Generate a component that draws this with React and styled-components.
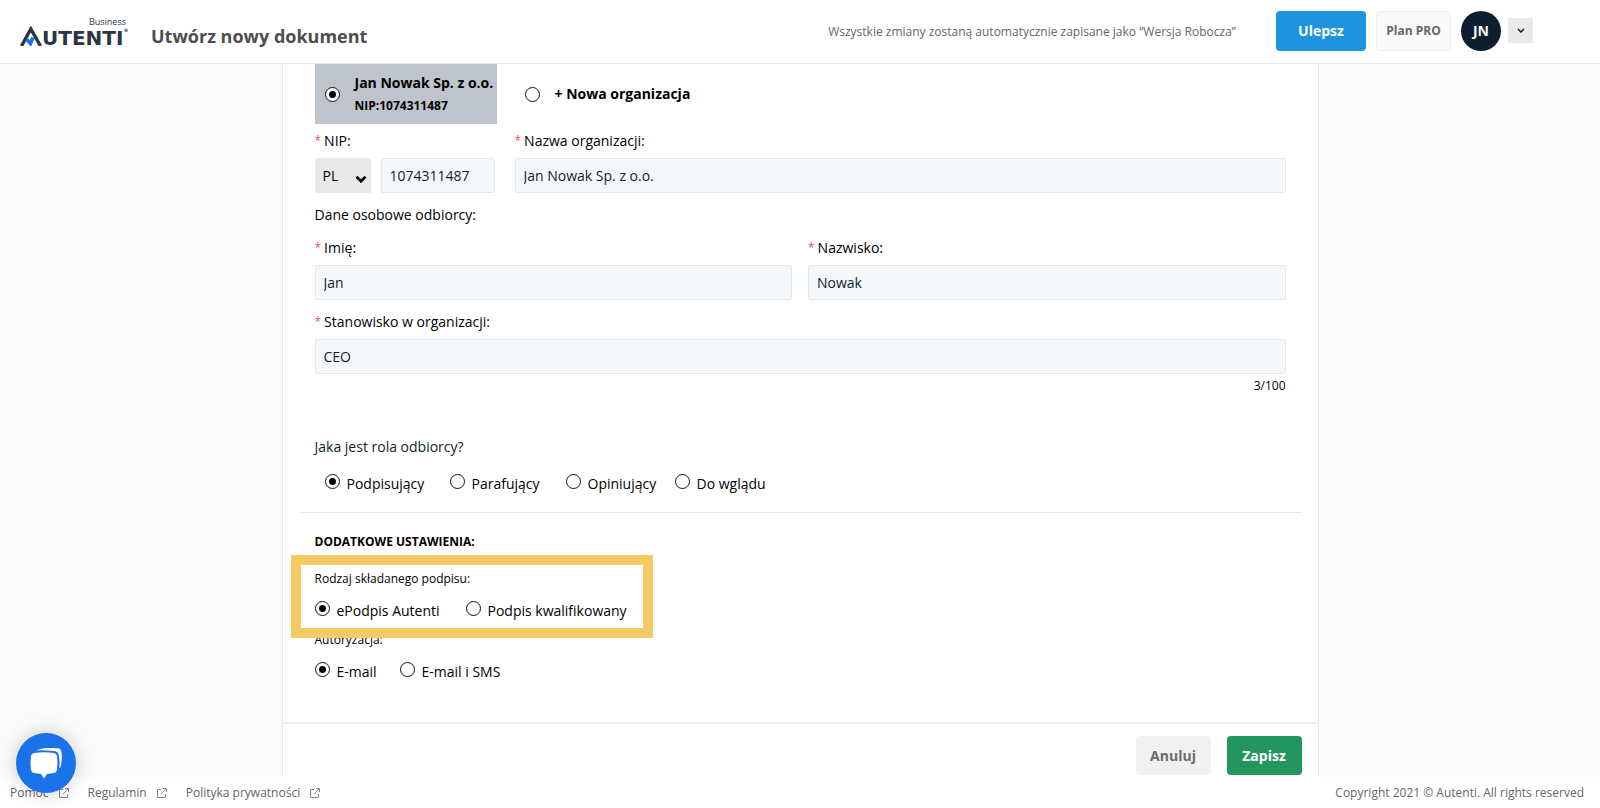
import React, { useState } from "react";
import styled, { createGlobalStyle } from "styled-components";

const GlobalStyle = createGlobalStyle`
  *, *::before, *::after { box-sizing: border-box; }
  body {
    margin: 0;
    background: #fbfbfb;
    color: #000;
    font-family: "Open Sans", "Noto Sans", sans-serif;
    font-size: 14px;
    line-height: 20px;
  }
  button, input, select { font: inherit; }
`;

const Page = styled.div`
  display: flex;
  flex-direction: column;
  min-height: 100vh;
`;

const Header = styled.header`
  display: flex;
  align-items: center;
  height: 64px;
  padding: 0 67px 2px 20px;
  background: #fff;
  border-bottom: 1px solid #e9e9e9;
`;

const Logo = styled.a`
  display: flex;
  flex-direction: column;
  width: 111px;
  padding-top: 2px;
  color: #2a3642;
  text-decoration: none;
`;

const LogoTag = styled.span`
  align-self: flex-end;
  margin-right: 5px;
  font-size: 9px;
  line-height: 9px;
`;

const LogoWord = styled.span`
  display: flex;
  align-items: flex-end;
  font-family: "DejaVu Sans", sans-serif;
  font-size: 20px;
  font-weight: 700;
  line-height: 18px;

  svg { flex: none; margin-bottom: 1px; }
  sup { align-self: flex-start; font-size: 5px; line-height: 8px; }
`;

const Title = styled.h1`
  margin: 10px 0 0 20px;
  color: #4d4d4d;
  font-size: 18px;
  line-height: 26px;
  white-space: nowrap;
`;

const AutosaveNote = styled.p`
  margin: 2px 40px 0 auto;
  color: #666;
  font-size: 12px;
  white-space: nowrap;
`;

const HeaderActions = styled.div`
  display: flex;
  align-items: center;
  gap: 10px;
`;

const UpgradeButton = styled.button`
  width: 90px;
  height: 40px;
  padding: 0;
  border: 0;
  border-radius: 4px;
  background: #1f93df;
  color: #fff;
  font-weight: 700;
`;

const PlanButton = styled.button`
  width: 75px;
  height: 40px;
  padding: 0;
  border: 1px solid #f0f0f0;
  border-radius: 4px;
  background: #fafafa;
  color: #666;
  font-size: 12px;
  font-weight: 700;
`;

const Account = styled.div`
  display: flex;
  align-items: center;
  gap: 7px;
`;

const Avatar = styled.span`
  display: grid;
  place-items: center;
  width: 40px;
  height: 40px;
  border-radius: 50%;
  background: #0d1f2f;
  color: #fff;
  font-weight: 700;
`;

const AccountToggle = styled.button`
  display: grid;
  place-items: center;
  width: 25px;
  height: 25px;
  padding: 0;
  border: 0;
  background: #e9e9e9;
  color: #0d1f2f;
`;

const Main = styled.main`
  display: flex;
  flex: 1;
  justify-content: center;
`;

const Card = styled.form`
  display: flex;
  flex-direction: column;
  width: 100%;
  max-width: 1037px;
  background: #fff;
  border: solid #e9e9e9;
  border-width: 0 1px;
`;

const Body = styled.div`
  flex: 1;
  padding: 0 32px 40px;
`;

const Organizations = styled.div`
  display: flex;
  gap: 18px;
`;

const OrganizationOption = styled.label`
  display: flex;
  align-items: center;
  gap: 15px;
  min-width: 182px;
  height: 60px;
  padding-left: 10px;
  background: ${(p) => (p.$active ? "#bfc3cc" : "transparent")};
  font-weight: 700;
  white-space: nowrap;

  small {
    display: block;
    margin-top: 4px;
    font-size: 12px;
    line-height: 18px;
  }
`;

const Radio = styled.input.attrs({ type: "radio" })`
  appearance: none;
  flex: none;
  width: 15px;
  height: 15px;
  margin: 0;
  border: 1px solid #111;
  border-radius: 50%;
  background: #fff;

  &:checked {
    background: radial-gradient(circle, #000 0 3px, #fff 4px);
  }
`;

const Row = styled.div`
  display: flex;
  gap: ${(p) => p.$gap}px;
  margin-top: ${(p) => p.$top}px;
`;

const Field = styled.div`
  flex: ${(p) => (p.$width ? "none" : 1)};
  width: ${(p) => (p.$width ? `${p.$width}px` : "auto")};
`;

const FieldLabel = styled.label`
  display: flex;
  gap: 3px;
  margin-bottom: 7px;

  &::before {
    content: "*";
    color: #f5515f;
    font-size: 12px;
  }
`;

const TextInput = styled.input`
  display: block;
  width: 100%;
  min-width: 0;
  height: 35px;
  padding: 0 8px;
  border: 1px solid #e6e9eb;
  border-radius: 2px;
  background: #f4f8fb;
  color: #0d1f2f;
`;

const TaxIdInputs = styled.div`
  display: flex;
  gap: 10px;
`;

const CountryBox = styled.div`
  position: relative;
  flex: none;
  width: 56px;

  svg {
    position: absolute;
    right: 4px;
    bottom: 10px;
    pointer-events: none;
  }
`;

const CountrySelect = styled.select`
  appearance: none;
  width: 100%;
  height: 35px;
  padding: 0 8px;
  border: 0;
  border-radius: 2px;
  background: #e9e9e9;
  color: #000;
`;

const SectionText = styled.p`
  margin: 12px 0 0;
`;

const Counter = styled.p`
  margin: 3px 0 0;
  font-size: 12px;
  line-height: 18px;
  text-align: right;
`;

const Group = styled.fieldset`
  position: relative;
  width: fit-content;
  margin: ${(p) => p.$top}px 0 0;
  padding: 0;
  border: 0;
`;

const HighlightedGroup = styled(Group)`
  z-index: 1;

  &::after {
    content: "";
    position: absolute;
    inset: -33px -26px -17px -24px;
    border: 10px solid #f3ca63;
    pointer-events: none;
  }
`;

const RoleLegend = styled.legend`
  padding: 0;
  color: #0d1f2f;
`;

const SmallLegend = styled.legend`
  padding: 0;
  font-size: 12px;
  line-height: 18px;
`;

const Choices = styled.div`
  display: grid;
  grid-template-columns: ${(p) => p.$columns};
  margin-top: ${(p) => p.$top}px;
  padding-left: ${(p) => p.$indent || 0}px;
`;

const Choice = styled.label`
  display: flex;
  align-items: flex-start;
  gap: 7px;
  white-space: nowrap;
`;

const Divider = styled.hr`
  height: 1px;
  margin: 18px -16px 0;
  border: 0;
  background: #e9e9e9;
`;

const SectionHeading = styled.h2`
  margin: 20px 0 0;
  font-size: 12px;
  line-height: 18px;
`;

const CardFooter = styled.div`
  display: flex;
  justify-content: flex-end;
  gap: 16px;
  padding: 12px 16px 2px;
  border-top: 2px solid #f0f0f0;
`;

const FormButton = styled.button`
  width: 75px;
  height: 39px;
  padding: 0;
  border: 0;
  border-radius: 4px;
  background: ${(p) => (p.$primary ? "#23965f" : "#f1f1f1")};
  color: ${(p) => (p.$primary ? "#fff" : "#6b6b6b")};
  font-weight: 700;
`;

const Footer = styled.footer`
  display: flex;
  align-items: center;
  gap: 18px;
  height: 31px;
  padding: 0 16px 0 10px;
  background: #fff;
  color: #666;
  font-size: 12px;
`;

const FooterLink = styled.a`
  display: flex;
  align-items: center;
  gap: 9px;
  color: inherit;
  text-decoration: none;
`;

const Copyright = styled.span`
  margin-left: auto;
`;

const ChatButton = styled.button`
  position: fixed;
  left: 16px;
  bottom: 15px;
  z-index: 2;
  width: 60px;
  height: 60px;
  padding: 0;
  border: 0;
  border-radius: 50%;
  background: #1972e8;
  box-shadow: 0 0 20px rgba(0, 0, 0, 0.2);
`;

function LogoMark() {
  return (
    <svg width="22" height="20" viewBox="0 0 22 20" aria-hidden="true">
      <path d="M1.500 20 10.800 3 20.500 20" fill="none" stroke="#2a3642" strokeWidth="3.400" />
      <path d="M7 13.500 10.500 17.500 13 11.500" fill="none" stroke="#1a73e8" strokeWidth="3.600" />
    </svg>
  );
}

function Chevron({ width = 8, height = 5, stroke = 1.5 }) {
  return (
    <svg width={width} height={height} viewBox="0 0 8 5" fill="none" aria-hidden="true">
      <path d="M1 1 4 4 7 1" stroke="currentColor" strokeWidth={stroke} />
    </svg>
  );
}

function ExternalIcon() {
  return (
    <svg width="12" height="12" viewBox="0 0 12 12" fill="none" stroke="#888" aria-hidden="true">
      <path d="M5 2.500H1.500V10.500H9.500V7M7 1.500H10.500V5M10.500 1.500 5 7" />
    </svg>
  );
}

function ChatIcon() {
  return (
    <svg width="60" height="60" viewBox="0 0 60 60" fill="#fff" aria-hidden="true">
      <path d="M20 17.500C25 14.500 38 14.500 43 15.500Q45 16 45.500 19Q46.500 28 44.500 34.500L43.500 35Q44 25 42 20Q41 18 38 18Q28 17 20 17.500Z" />
      <path d="M18 20Q28 18.500 38 20Q40.500 20.500 41 23Q42 30 41 37Q40.500 39.500 38 40L31 41L28 45.500L25 41L18 40Q15.500 39.500 15 37Q14 30 15 23Q15.500 20.500 18 20Z" />
    </svg>
  );
}

function ChoiceGroup({ name, options, value, onChange, columns, top, indent }) {
  return (
    <Choices $columns={columns} $top={top} $indent={indent}>
      {options.map((option) => (
        <Choice key={option}>
          <Radio name={name} checked={value === option} onChange={() => onChange(option)} />
          {option}
        </Choice>
      ))}
    </Choices>
  );
}

const ROLES = ["Podpisujący", "Parafujący", "Opiniujący", "Do wglądu"];
const SIGNATURES = ["ePodpis Autenti", "Podpis kwalifikowany"];
const AUTHORIZATIONS = ["E-mail", "E-mail i SMS"];
const LINKS = ["Pomoc", "Regulamin", "Polityka prywatności"];

export default function App() {
  const [organization, setOrganization] = useState("existing");
  const [position, setPosition] = useState("CEO");
  const [role, setRole] = useState(ROLES[0]);
  const [signature, setSignature] = useState(SIGNATURES[0]);
  const [authorization, setAuthorization] = useState(AUTHORIZATIONS[0]);

  return (
    <Page>
      <GlobalStyle />
      <Header>
        <Logo href="#" aria-label="Autenti Business">
          <LogoTag>Business</LogoTag>
          <LogoWord>
            <LogoMark />
            UTENTI
            <sup>®</sup>
          </LogoWord>
        </Logo>
        <Title>Utwórz nowy dokument</Title>
        <AutosaveNote>
          Wszystkie zmiany zostaną automatycznie zapisane jako “Wersja Robocza”
        </AutosaveNote>
        <HeaderActions>
          <UpgradeButton type="button">Ulepsz</UpgradeButton>
          <PlanButton type="button">Plan PRO</PlanButton>
          <Account>
            <Avatar>JN</Avatar>
            <AccountToggle type="button" aria-label="Konto">
              <Chevron />
            </AccountToggle>
          </Account>
        </HeaderActions>
      </Header>

      <Main>
        <Card onSubmit={(e) => e.preventDefault()}>
          <Body>
            <Organizations>
              <OrganizationOption $active={organization === "existing"}>
                <Radio
                  name="organization"
                  checked={organization === "existing"}
                  onChange={() => setOrganization("existing")}
                />
                <span>
                  Jan Nowak Sp. z o.o.
                  <small>NIP:1074311487</small>
                </span>
              </OrganizationOption>
              <OrganizationOption $active={organization === "new"}>
                <Radio
                  name="organization"
                  checked={organization === "new"}
                  onChange={() => setOrganization("new")}
                />
                + Nowa organizacja
              </OrganizationOption>
            </Organizations>

            <Row $top={7} $gap={20}>
              <Field $width={180}>
                <FieldLabel htmlFor="nip">NIP:</FieldLabel>
                <TaxIdInputs>
                  <CountryBox>
                    <CountrySelect aria-label="Kraj" defaultValue="PL">
                      <option>PL</option>
                    </CountrySelect>
                    <Chevron width={12} height={8} stroke={1.8} />
                  </CountryBox>
                  <TextInput id="nip" defaultValue="1074311487" />
                </TaxIdInputs>
              </Field>
              <Field>
                <FieldLabel htmlFor="organization-name">Nazwa organizacji:</FieldLabel>
                <TextInput id="organization-name" defaultValue="Jan Nowak Sp. z o.o." />
              </Field>
            </Row>

            <SectionText>Dane osobowe odbiorcy:</SectionText>

            <Row $top={13} $gap={16}>
              <Field>
                <FieldLabel htmlFor="first-name">Imię:</FieldLabel>
                <TextInput id="first-name" defaultValue="Jan" />
              </Field>
              <Field>
                <FieldLabel htmlFor="last-name">Nazwisko:</FieldLabel>
                <TextInput id="last-name" defaultValue="Nowak" />
              </Field>
            </Row>

            <Row $top={12} $gap={0}>
              <Field>
                <FieldLabel htmlFor="position">Stanowisko w organizacji:</FieldLabel>
                <TextInput
                  id="position"
                  maxLength={100}
                  value={position}
                  onChange={(e) => setPosition(e.target.value)}
                />
                <Counter>{position.length}/100</Counter>
              </Field>
            </Row>

            <Group $top={42}>
              <RoleLegend>Jaka jest rola odbiorcy?</RoleLegend>
              <ChoiceGroup
                name="role"
                options={ROLES}
                value={role}
                onChange={setRole}
                columns="125px 116px 109px auto"
                top={17}
                indent={10}
              />
            </Group>

            <Divider />

            <SectionHeading>DODATKOWE USTAWIENIA:</SectionHeading>

            <HighlightedGroup $top={19}>
              <SmallLegend>Rodzaj składanego podpisu:</SmallLegend>
              <ChoiceGroup
                name="signature"
                options={SIGNATURES}
                value={signature}
                onChange={setSignature}
                columns="151px auto"
                top={13}
              />
            </HighlightedGroup>

            <Group $top={10}>
              <SmallLegend>Autoryzacja:</SmallLegend>
              <ChoiceGroup
                name="authorization"
                options={AUTHORIZATIONS}
                value={authorization}
                onChange={setAuthorization}
                columns="85px auto"
                top={13}
              />
            </Group>
          </Body>

          <CardFooter>
            <FormButton type="button">Anuluj</FormButton>
            <FormButton type="submit" $primary>
              Zapisz
            </FormButton>
          </CardFooter>
        </Card>
      </Main>

      <Footer>
        {LINKS.map((link) => (
          <FooterLink key={link} href="#">
            {link}
            <ExternalIcon />
          </FooterLink>
        ))}
        <Copyright>Copyright 2021 © Autenti. All rights reserved</Copyright>
      </Footer>

      <ChatButton type="button" aria-label="Czat">
        <ChatIcon />
      </ChatButton>
    </Page>
  );
}
